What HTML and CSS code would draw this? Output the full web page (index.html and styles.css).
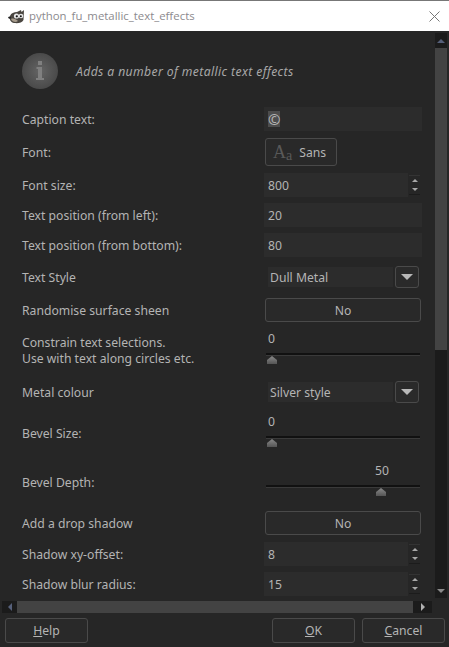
FILE: index.html
```html
<!DOCTYPE html>
<html lang="en">
<head>
<meta charset="utf-8">
<title>python_fu_metallic_text_effects</title>
<link rel="stylesheet" href="styles.css">
</head>
<body>
<div class="window">
  <header class="titlebar">
    <svg class="wilber" width="17" height="15" viewBox="0 0 17 15">
      <path d="M2 7C3 4 6 3 9 3L13 1 13.500 3 16 1 15.500 11C14 14 10 14.500 6 14 3 13.500 1 11 2 7Z" fill="#4a4640"/>
      <path d="M3 10C5 9 8 10 10 12 8 14 4 13 3 10Z" fill="#a89c8c"/>
      <circle cx="8.500" cy="7" r="2.600" fill="#e8e8e8"/>
      <circle cx="13" cy="7" r="2.300" fill="#e8e8e8"/>
      <circle cx="8.800" cy="7.300" r="1.100" fill="#111"/>
      <circle cx="12.800" cy="7.300" r="1" fill="#111"/>
      <path d="M0 8.500C1 7 2.500 7.500 3 8.500 3 10 1 10.500 0 8.500Z" fill="#222"/>
    </svg>
    <span class="title">python_fu_metallic_text_effects</span>
    <svg class="close" width="11" height="11" viewBox="0 0 11 11"><path d="M.5.500 10.500 10.500M10.500.500.500 10.500" stroke="#777" fill="none"/></svg>
  </header>
  <div class="body">
    <div class="viewport">
      <div class="intro">
        <svg class="info" width="36" height="36" viewBox="0 0 36 36">
          <defs><radialGradient id="infoFill" cx=".5" cy=".5" r=".55"><stop offset="0" stop-color="#656565"/><stop offset="1" stop-color="#474747"/></radialGradient></defs>
          <circle cx="18" cy="18" r="18" fill="url(#infoFill)"/>
          <rect x="16" y="8" width="4" height="4" fill="#808080"/>
          <path d="M14.500 14H20V25H22V27H14V25H16V16H14.500Z" fill="#808080"/>
        </svg>
        <em class="intro-text">Adds a number of metallic text effects</em>
      </div>
      <div class="form">
        <div class="row row-first"><span class="label">Caption text:</span><div class="entry"><span class="selected">©</span></div></div>
        <div class="row row-font"><span class="label">Font:</span><button class="btn font-btn"><span class="aa-big">A</span><span class="aa-small">a</span><span class="font-name">Sans</span></button></div>
        <div class="row gap7"><span class="label">Font size:</span><div class="spin"><div class="entry entry-short">800</div><div class="spin-btns"><i class="up"></i><i class="down"></i></div></div></div>
        <div class="row"><span class="label">Text position (from left):</span><div class="entry">20</div></div>
        <div class="row"><span class="label">Text position (from bottom):</span><div class="entry">80</div></div>
        <div class="row gap8"><span class="label">Text Style</span><div class="combo"><span class="combo-value">Dull Metal</span><span class="combo-btn"><i class="down-lg"></i></span></div></div>
        <div class="row gap9"><span class="label">Randomise surface sheen</span><button class="btn toggle">No</button></div>
        <div class="row row-scale gap7"><span class="label label-two">Constrain text selections.<br>Use with text along circles etc.</span><div class="scale"><span class="scale-value">0</span><div class="trough"></div><i class="thumb"></i></div></div>
        <div class="row gap14"><span class="label">Metal colour</span><div class="combo"><span class="combo-value">Silver style</span><span class="combo-btn"><i class="down-lg"></i></span></div></div>
        <div class="row row-scale gap8"><span class="label label-low">Bevel Size:</span><div class="scale"><span class="scale-value">0</span><div class="trough"></div><i class="thumb"></i></div></div>
        <div class="row row-scale gap12"><span class="label label-low">Bevel Depth:</span><div class="scale scale-mid"><span class="scale-value">50</span><div class="trough"></div><i class="thumb"></i></div></div>
        <div class="row gap13"><span class="label">Add a drop shadow</span><button class="btn toggle">No</button></div>
        <div class="row gap7"><span class="label">Shadow xy-offset:</span><div class="spin"><div class="entry entry-short">8</div><div class="spin-btns"><i class="up"></i><i class="down"></i></div></div></div>
        <div class="row"><span class="label">Shadow blur radius:</span><div class="spin"><div class="entry entry-short">15</div><div class="spin-btns"><i class="up"></i><i class="down"></i></div></div></div>
      </div>
    </div>
    <div class="vscroll">
      <span class="v-end"><i class="up-sb"></i></span>
      <span class="v-thumb"></span>
      <span class="v-fill"></span>
      <span class="v-end v-end-b"><i class="down-sb"></i></span>
    </div>
  </div>
  <div class="hscroll">
    <span class="h-end"><i class="left-sb"></i></span>
    <span class="h-thumb"></span>
    <span class="h-end h-end-r"><i class="right-sb"></i></span>
  </div>
  <footer class="footer">
    <button class="btn action"><u>H</u>elp</button>
    <span class="spacer"></span>
    <button class="btn action"><u>O</u>K</button>
    <button class="btn action"><u>C</u>ancel</button>
  </footer>
</div>
</body>
</html>
```
FILE: styles.css
```css
* { box-sizing: border-box; }
html, body { margin: 0; padding: 0; background: #262626; }
body { width: 449px; height: 647px; overflow: hidden; font: 12.2px/16px "Noto Sans", sans-serif; color: #b4b4b4; }
.window { width: 449px; height: 647px; display: flex; flex-direction: column; background: #262626; }
i { display: block; }

.titlebar { height: 31px; flex: none; background: #fff; border-top: 1px solid #777; display: flex; align-items: center; padding: 0 8px 0 8px; }
.wilber { flex: none; margin-right: 4px; }
.title { flex: 1; color: #8c8a8e; font-size: 11.4px; font-family: "Open Sans", sans-serif; }
.close { flex: none; margin-right: 1px; }

.body { height: 567px; flex: none; display: flex; padding-top: 2px; }
.viewport { width: 435px; flex: none; overflow: hidden; padding-left: 22px; }
.intro { height: 74px; padding-top: 20px; display: flex; align-items: flex-start; }
.info { flex: none; }
.intro-text { margin: 11px 0 0 18px; color: #a8a8a8; font-style: italic; letter-spacing: .38px; }

.form { display: flex; flex-direction: column; gap: 6px; }
.row { display: flex; align-items: center; min-height: 24px; }
.row-first { margin-top: 0; }
.row-font { margin-top: 1px; height: 28px; }
.gap7 { margin-top: 1px; }
.gap8 { margin-top: 2px; }
.gap9 { margin-top: 3px; }
.gap12 { margin-top: 6px; }
.gap13 { margin-top: 7px; }
.gap14 { margin-top: 8px; }
.label { width: 242px; flex: none; padding-top: 2px; }
.label-two { line-height: 16px; align-self: flex-start; padding-top: 6px; }
.label-low { align-self: flex-start; padding-top: 14px; }

.entry { width: 158px; height: 24px; background: #2c2c2c; padding: 5px 4px 0; color: #b4b4b4; }
.entry-short { width: 144px; }
.selected { background: #4d4d4d; display: inline-block; line-height: 16px; font-size: 15px; margin-top: -1px; vertical-align: top; }
.spin { display: flex; width: 158px; }
.spin-btns { width: 11px; margin: 2px 0 0 1px; height: 20px; border-top: 1px solid #333; border-bottom: 1px solid #1c1c1c; display: flex; flex-direction: column; align-items: center; justify-content: space-around; background: linear-gradient(#262626 49%, #1c1c1c 49%, #1c1c1c 52%, #262626 52%); }
.up { border: 3px solid transparent; border-top: 0; border-bottom: 3px solid #a8a8a8; }
.down { border: 3px solid transparent; border-bottom: 0; border-top: 3px solid #a8a8a8; }

.btn { font: inherit; color: #b4b4b4; background: #292929; border: 1px solid #4a4a4a; border-radius: 3px; padding: 0; }
.font-btn { width: 72px; height: 28px; margin-left: 1px; display: flex; align-items: center; padding-left: 7px; }
.aa-big { font: 18px/20px "Liberation Serif", serif; color: #595959; }
.aa-small { font: 14px/14px "Liberation Serif", serif; color: #595959; margin-top: 8px; }
.font-name { margin: 2px 0 0 7px; }
.toggle { width: 156px; height: 24px; margin-left: 1px; padding-top: 2px; }

.combo { width: 155px; margin-left: 4px; display: flex; align-items: center; gap: 2px; height: 24px; }
.combo-value { width: 125px; height: 20px; background: #2c2c2c; padding: 3px 2px 0; }
.combo-btn { width: 24px; height: 22px; border: 1px solid #4a4a4a; border-radius: 3px; background: #2a2a2a; display: flex; align-items: center; justify-content: center; }
.down-lg { border: 6px solid transparent; border-bottom: 0; border-top: 6px solid #b8b8b8; }

.row-scale { height: 37px; align-items: flex-start; }
.scale { width: 154px; margin-left: 2px; position: relative; height: 37px; }
.scale-value { display: block; padding: 2px 0 0 2px; height: 24px; }
.trough { height: 2px; background: #111; box-shadow: 0 1px 0 #3a3a3a; }
.thumb { position: absolute; left: 1px; top: 27px; width: 10px; height: 8px; background: linear-gradient(#8a8a8a, #555); clip-path: polygon(50% 0, 100% 50%, 100% 100%, 0 100%, 0 50%); }
.scale-mid .scale-value { padding-left: 109px; }
.scale-mid .thumb { left: 110px; }

.vscroll { width: 12px; height: 565px; flex: none; background: #1b1b1b; display: flex; flex-direction: column; }
.v-end { height: 15px; flex: none; display: flex; align-items: center; justify-content: center; }
.v-end-b { height: 15px; }
.v-thumb { height: 302px; flex: none; background: #434343; }
.v-fill { flex: 1; }
.up-sb { border: 4px solid transparent; border-top: 0; border-bottom: 4px solid #56607a; }
.down-sb { border: 4px solid transparent; border-bottom: 0; border-top: 4px solid #8a8a8a; }

.hscroll { height: 12px; flex: none; width: 430px; margin: 3px 0 0 2px; background: #1b1b1b; display: flex; align-items: stretch; }
.h-end { width: 15px; flex: none; display: flex; align-items: center; justify-content: center; }
.h-end-r { width: 19px; }
.h-thumb { flex: 1; background: #434343; }
.left-sb { border: 4px solid transparent; border-left: 0; border-right: 4px solid #56607a; }
.right-sb { border: 4px solid transparent; border-right: 0; border-left: 4px solid #b0b0b0; }

.footer { flex: none; display: flex; gap: 7px; padding: 5px 4px 0 5px; }
.spacer { flex: 1; }
.action { width: 83px; height: 25px; }
```
